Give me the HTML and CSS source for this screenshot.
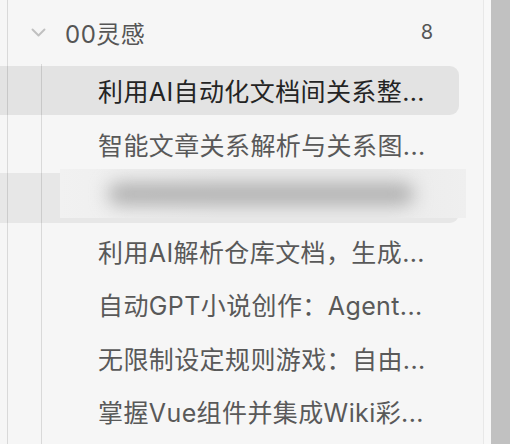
FILE: index.html
```html
<!DOCTYPE html>
<html lang="zh">
<head>
<meta charset="utf-8">
<link rel="stylesheet" href="styles.css">
</head>
<body>
<div class="sidebar">
  <div class="tree">
    <div class="folder-head">
      <svg class="chevron" width="15" height="9" viewBox="0 0 15 9"><path d="M1.5 1.5 L7.5 7.5 L13.5 1.5" fill="none" stroke="#c0c0c0" stroke-width="1.9" stroke-linecap="round" stroke-linejoin="round"/></svg>
      <span class="folder-name">00灵感</span>
      <span class="folder-count">8</span>
    </div>
    <div class="children">
      <div class="item selected"><span class="label">利用AI自动化文档间关系整...</span></div>
      <div class="item"><span class="label">智能文章关系解析与关系图...</span></div>
      <div class="item hover">
        <div class="ghost"><div class="ghost-text"></div></div>
      </div>
      <div class="item"><span class="label">利用AI解析仓库文档，生成...</span></div>
      <div class="item"><span class="label">自动GPT小说创作：Agent...</span></div>
      <div class="item"><span class="label">无限制设定规则游戏：自由...</span></div>
      <div class="item"><span class="label">掌握Vue组件并集成Wiki彩...</span></div>
    </div>
  </div>
  <div class="divider"></div>
  <div class="gutter"></div>
  <div class="scrollbar"></div>
</div>
</body>
</html>
```
FILE: styles.css
```css
html, body {
  margin: 0;
  padding: 0;
  background: #f6f6f6;
}
body {
  width: 510px;
  height: 444px;
  overflow: hidden;
  font-family: "Inter", "Noto Sans CJK SC", sans-serif;
}
.sidebar {
  display: flex;
  width: 510px;
  height: 444px;
}
.tree {
  width: 483px;
  height: 444px;
  background: linear-gradient(#d9d9d9, #d9d9d9) 7px 0 / 1px 100% no-repeat;
}
.folder-head {
  height: 64px;
  display: flex;
  align-items: center;
  padding-left: 31px;
  padding-right: 50px;
  box-sizing: border-box;
  color: #555;
}
.chevron {
  display: block;
  margin-top: 1px;
}
.folder-name {
  margin-left: 19px;
  font-size: 24px;
  letter-spacing: 0.5px;
}
.folder-count {
  margin-left: auto;
  font-size: 20px;
}
.children {
  display: flex;
  flex-direction: column;
  gap: 4.5px;
  padding-top: 1.5px;
  background: linear-gradient(#d9d9d9, #d9d9d9) 41px 0 / 1px 100% no-repeat;
  height: 380px;
}
.item {
  position: relative;
  height: 49px;
  width: 459px;
  flex: none;
  display: flex;
  align-items: center;
  padding-left: 98px;
  box-sizing: border-box;
  border-radius: 0 9px 9px 0;
  color: #595959;
  font-size: 25px;
  white-space: nowrap;
}
.item .label {
  letter-spacing: 0.4px;
}
.item.selected {
  background: rgba(0, 0, 0, 0.075);
  color: #242424;
}
.item.hover {
  height: 50px;
  margin-bottom: -1px;
  background: rgba(0, 0, 0, 0.06);
}
.ghost {
  position: absolute;
  left: 60px;
  top: -4px;
  width: 406px;
  height: 49px;
  background: linear-gradient(90deg, #f1f1f1, #ebebeb 40%, #ebebeb 80%, #efefef);
  overflow: hidden;
}
.ghost-text {
  position: absolute;
  left: 48px;
  top: 14px;
  width: 306px;
  height: 22px;
  border-radius: 11px;
  background: #b0b0b0;
  filter: blur(9px);
}
.divider {
  width: 1px;
  background: #e8e8e8;
}
.gutter {
  width: 7px;
  background: #f8f8f8;
}
.scrollbar {
  width: 19px;
  background: #c1c1c1;
}
```
